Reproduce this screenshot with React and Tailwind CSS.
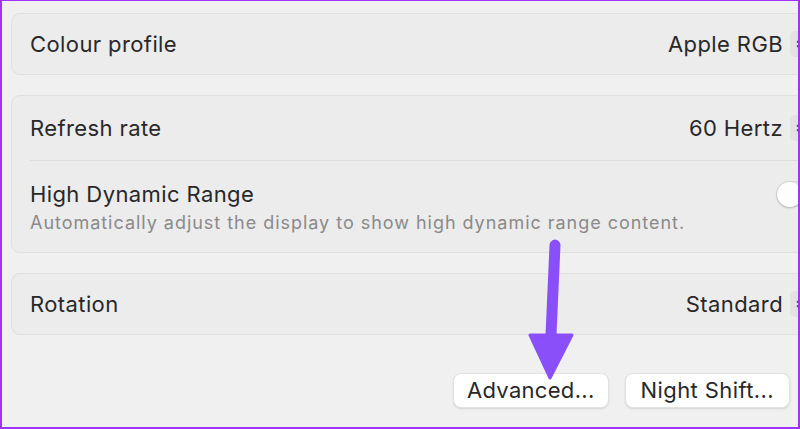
import React from 'react';

const font = { fontFamily: 'Inter, "Noto Sans", sans-serif' };

const Popup = () => (
  <div className="ml-[7px] w-[20px] h-[26px] rounded-[5px] bg-[#e2e2e2] flex items-center justify-center">
    <svg width="8" height="14" viewBox="0 0 8 14" fill="none" stroke="#3a3a3a" strokeWidth="1.6" strokeLinecap="round" strokeLinejoin="round">
      <path d="M1.5 5 L4 2.5 L6.5 5" />
      <path d="M1.5 9 L4 11.5 L6.5 9" />
    </svg>
  </div>
);

const Row = ({ label, value, h = 'h-[60px]' }) => (
  <div className={`${h} flex items-center justify-between pl-[18px] pr-[8px]`}>
    <span className="text-[22px] tracking-[0.4px] text-[#282828]">{label}</span>
    <div className="flex items-center">
      <span className="text-[22px] tracking-[0.4px] text-[#282828]">{value}</span>
      <Popup />
    </div>
  </div>
);

const App = () => {
  return (
    <div style={font} className="w-[800px] h-[429px] overflow-hidden border-2 border-t border-[#a033f5] bg-[#f0f0f0] relative">
      <div className="w-[808px] ml-[9px] pt-[12px] flex flex-col">
        {/* colour profile */}
        <div className="rounded-[9px] border border-[#e0e0e0] bg-[#ececec]">
          <Row label="Colour profile" value="Apple RGB" />
        </div>

        {/* refresh + hdr */}
        <div className="mt-[20px] rounded-[9px] border border-[#e0e0e0] bg-[#ececec]">
          <Row label="Refresh rate" value="60 Hertz" h="h-[64px]" />
          <div className="ml-[18px] h-px bg-[#dcdcdc]" />
          <div className="h-[91px] flex items-start justify-between pl-[18px] pt-[19px]">
            <div className="flex flex-col">
              <span className="text-[22px] leading-[28px] tracking-[0.4px] text-[#282828]">High Dynamic Range</span>
              <span className="mt-[4px] text-[18px] leading-[22px] tracking-[0.97px] text-[#8a8a8a]">
                Automatically adjust the display to show high dynamic range content.
              </span>
            </div>
            <div className="mt-[1px] mr-[-6px] w-[48px] h-[26px] rounded-full bg-[#e3e3e3] border border-[#d6d6d6] flex items-center">
              <div className="w-[25px] h-[25px] rounded-full bg-white shadow-[0_1px_2px_rgba(0,0,0,0.25)]" />
            </div>
          </div>
        </div>

        {/* rotation */}
        <div className="mt-[20px] rounded-[9px] border border-[#e0e0e0] bg-[#ececec]">
          <Row label="Rotation" value="Standard" />
        </div>

        <div className="mt-[38px] flex justify-end gap-[16px] pr-[29px]">
          <button className="h-[35px] px-[13px] rounded-[8px] bg-white border border-[#e2e2e2] shadow-[0_1px_2px_rgba(0,0,0,0.12)] text-[22px] tracking-[0.3px] text-[#282828]">
            Advanced...
          </button>
          <button className="h-[35px] px-[15px] rounded-[8px] bg-white border border-[#e2e2e2] shadow-[0_1px_2px_rgba(0,0,0,0.12)] text-[22px] tracking-[0.4px] text-[#282828]">
            Night Shift...
          </button>
        </div>
      </div>

      {/* annotation arrow */}
      <svg className="absolute left-[524px] top-[236px]" width="52" height="145" viewBox="0 0 52 145">
        <path d="M29 4 C31 4 33 6 33 8 L29 98 L46 98 L24 141 L4 98 L21 98 L25 8 C25 6 27 4 29 4 Z" fill="#8a4ff8" stroke="#8a4ff8" strokeWidth="3" strokeLinejoin="round" />
      </svg>
    </div>
  );
};

export default App;
